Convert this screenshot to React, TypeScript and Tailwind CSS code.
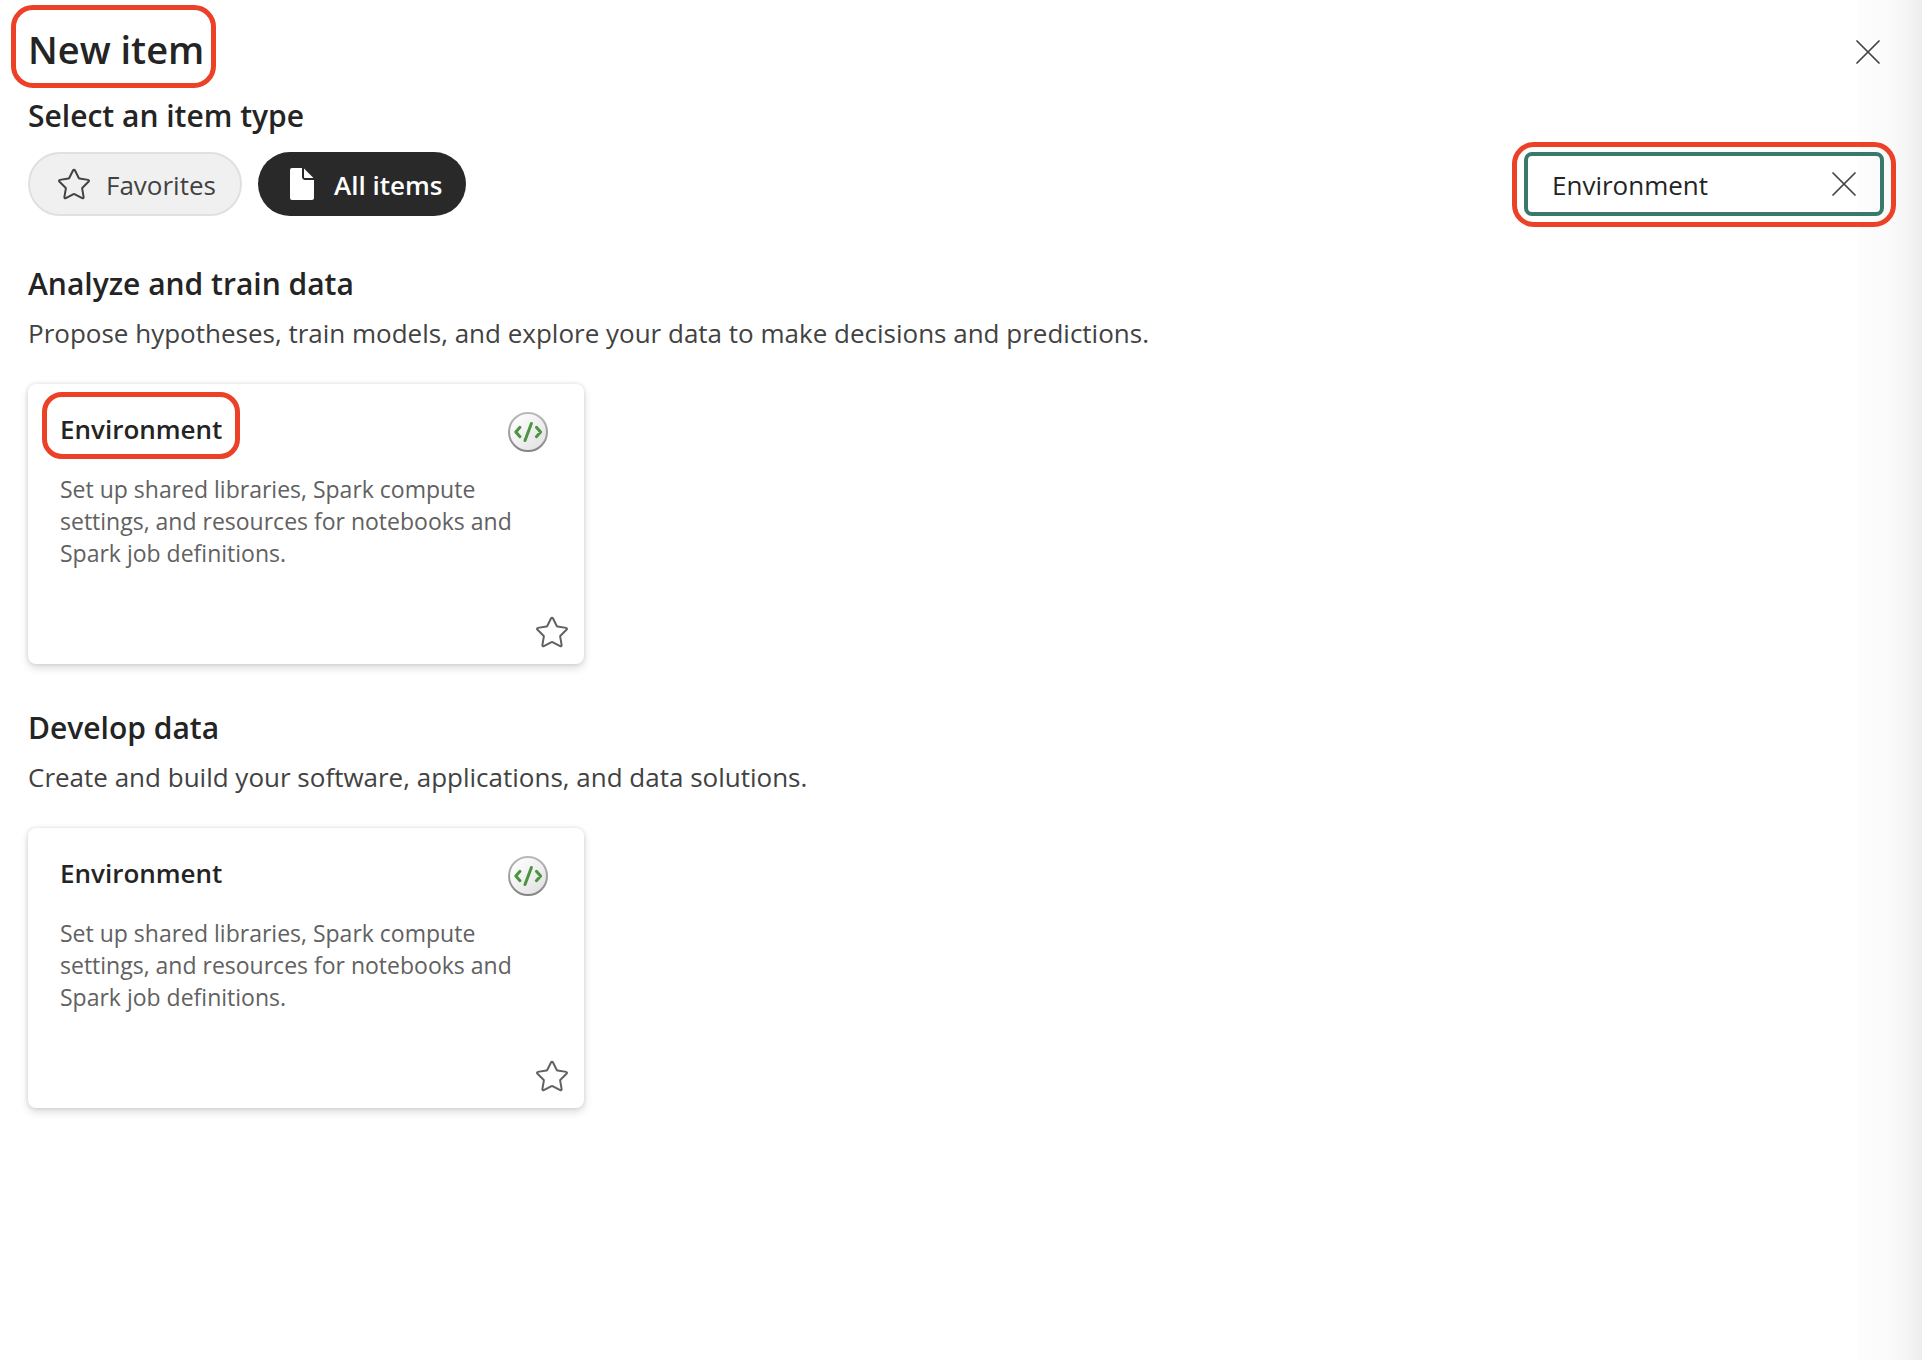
import React from "react";

const STAR_PATH =
  "M9.1 2.9a1 1 0 0 1 1.8 0l1.93 3.91 4.31.63a1 1 0 0 1 .56 1.7l-3.12 3.05.73 4.3a1 1 0 0 1-1.45 1.05L10 15.51l-3.86 2.03a1 1 0 0 1-1.45-1.05l.74-4.3L2.3 9.14a1 1 0 0 1 .56-1.7l4.31-.63L9.1 2.9Zm.9.44L8.07 7.25a1 1 0 0 1-.75.55L3 8.43l3.12 3.04a1 1 0 0 1 .3.89l-.75 4.3 3.87-2.03a1 1 0 0 1 .93 0l3.86 2.03-.74-4.3a1 1 0 0 1 .29-.89L17 8.43l-4.32-.63a1 1 0 0 1-.75-.55L10 3.35Z";

function StarIcon() {
  return (
    <svg viewBox="0 0 20 20" className="size-10" fill="currentColor" aria-hidden="true">
      <path d={STAR_PATH} />
    </svg>
  );
}

function DocumentIcon() {
  return (
    <svg viewBox="0 0 20 20" className="size-10" fill="currentColor" aria-hidden="true">
      <path d="M10 2v4.5c0 .83.67 1.5 1.5 1.5H16v9c0 .55-.45 1-1 1H5a1 1 0 0 1-1-1V3a1 1 0 0 1 1-1H10Zm1 .25V6.5c0 .28.22.5.5.5h4.25L11 2.25Z" />
    </svg>
  );
}

function CloseIcon() {
  return (
    <svg viewBox="0 0 24 24" className="size-6" fill="none" stroke="currentColor" strokeWidth="1.7" strokeLinecap="round" aria-hidden="true">
      <path d="M1 1l22 22M23 1L1 23" />
    </svg>
  );
}

function EnvironmentIcon({ id }: { id: string }) {
  return (
    <svg viewBox="0 0 40 40" className="size-10" aria-hidden="true">
      <defs>
        <linearGradient id={`${id}-fill`} x1="0" y1="0" x2="1" y2="1">
          <stop offset="0.1" stopColor="#ffffff" />
          <stop offset="1" stopColor="#dedede" />
        </linearGradient>
        <linearGradient id={`${id}-ring`} x1="0" y1="0" x2="0" y2="1">
          <stop offset="0" stopColor="#bababa" />
          <stop offset="1" stopColor="#858585" />
        </linearGradient>
      </defs>
      <circle cx="20" cy="20" r="19" fill={`url(#${id}-fill)`} stroke={`url(#${id}-ring)`} strokeWidth="2" />
      <g fill="none" stroke="#4b9440" strokeWidth="3" strokeLinecap="round" strokeLinejoin="round">
        <path d="M12 15.3L7.8 20l4.2 4.7M28.4 15.3l4.2 4.7-4.2 4.7M23.4 11.5L17 28.5" />
      </g>
    </svg>
  );
}

function Highlight({ className }: { className: string }) {
  return <span aria-hidden="true" className={`pointer-events-none absolute border-5 border-[#ec4027] ${className}`} />;
}

function ItemCard({ id, highlighted = false }: { id: string; highlighted?: boolean }) {
  return (
    <article className="flex min-h-70 w-full max-w-139 flex-col rounded-lg bg-white shadow-[0_0_4px_rgba(0,0,0,0.12),0_4px_8px_rgba(0,0,0,0.14)]">
      <div className="flex items-start justify-between pt-7 pr-9 pl-8">
        <h3 className="relative text-[26px] leading-[34px] font-semibold">
          Environment
          {highlighted && <Highlight className="-inset-x-[18px] -top-5 -bottom-[13px] rounded-[20px]" />}
        </h3>
        <EnvironmentIcon id={id} />
      </div>
      <p className="mt-[21px] pr-16 pl-8 text-[23px] leading-8 text-[#616161]">
        Set up shared libraries, Spark compute settings, and resources for notebooks and Spark job definitions.
      </p>
      <button type="button" aria-label="Add Environment to favorites" className="mt-auto mr-3 mb-3 self-end text-[#616161]">
        <StarIcon />
      </button>
    </article>
  );
}

function Section({ title, description, children }: { title: string; description: string; children: React.ReactNode }) {
  return (
    <section>
      <h2 className="text-[30px] leading-12 font-semibold">{title}</h2>
      <p className="mt-1 text-[26px] leading-[42px] text-[#424242]">{description}</p>
      <div className="mt-[30px]">{children}</div>
    </section>
  );
}

export default function App() {
  return (
    <main className="min-h-screen bg-[linear-gradient(to_left,#ececec,#f5f5f5_14px,#fafafa_32px,#fdfdfd_64px,#fff_66px)] px-7 pb-16 font-['Open_Sans','Noto_Sans',sans-serif] text-[#242424]">
      <header className="flex items-start justify-between pt-6">
        <h1 className="relative text-[38px] leading-[50px] font-semibold">
          New item
          <Highlight className="-top-[19px] -right-3 -bottom-3.5 -left-[17px] rounded-[22px]" />
        </h1>
        <button type="button" aria-label="Close" className="mt-4 mr-3.5 text-[#424242]">
          <CloseIcon />
        </button>
      </header>
      <p className="mt-5 text-[30px] leading-11 font-semibold">Select an item type</p>
      <div className="mt-3.5 flex items-center justify-between">
        <div className="flex gap-4">
          <button type="button" className="flex h-16 items-center gap-3 rounded-full border-2 border-[#e0e0e0] bg-[#f0f0f0] px-6 text-[26px] text-[#424242]">
            <StarIcon />
            <span className="pt-0.5">Favorites</span>
          </button>
          <button type="button" aria-pressed="true" className="flex h-16 items-center gap-3 rounded-full bg-[#292929] px-6 text-[26px] font-semibold text-white">
            <DocumentIcon />
            <span className="pt-0.5">All items</span>
          </button>
        </div>
        <div className="relative mr-2.5 flex h-16 w-90 items-center rounded-lg border-4 border-[#38796a] px-6">
          <input
            type="text"
            aria-label="Filter by item type"
            defaultValue="Environment"
            className="min-w-0 flex-1 bg-transparent pt-0.5 text-[26px] outline-none"
          />
          <button type="button" aria-label="Clear" className="text-[#424242]">
            <CloseIcon />
          </button>
          <Highlight className="-inset-x-4 -top-3.5 -bottom-[15px] rounded-[22px]" />
        </div>
      </div>
      <div className="mt-11 flex flex-col gap-10">
        <Section title="Analyze and train data" description="Propose hypotheses, train models, and explore your data to make decisions and predictions.">
          <ItemCard id="analyze-environment" highlighted />
        </Section>
        <Section title="Develop data" description="Create and build your software, applications, and data solutions.">
          <ItemCard id="develop-environment" />
        </Section>
      </div>
    </main>
  );
}
